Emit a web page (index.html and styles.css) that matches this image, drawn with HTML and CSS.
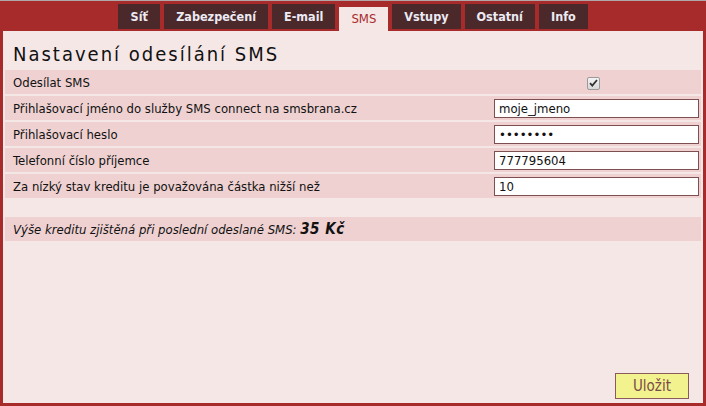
FILE: index.html
```html
<!DOCTYPE html>
<html lang="cs">
<head>
    <meta charset="UTF-8">
    <title>Nastavení SMS</title>
    <link rel="stylesheet" href="styles.css">
</head>
<body>

<div class="top">
    <ul class="tabs">
        <li>Síť</li>
        <li>Zabezpečení</li>
        <li>E-mail</li>
        <li class="active">SMS</li>
        <li>Vstupy</li>
        <li>Ostatní</li>
        <li>Info</li>
    </ul>
</div>

<div class="panel">
    <h1>Nastavení odesílání SMS</h1>

    <table class="form">
        <tr>
            <td class="label">Odesílat SMS</td>
            <td class="field center">
                <span class="check">
                    <svg width="9" height="8" viewBox="0 0 9 8"><path d="M1 4.2 L3.3 6.6 L8 1" fill="none" stroke="#333" stroke-width="1.8"/></svg>
                </span>
            </td>
        </tr>
        <tr>
            <td class="label">Přihlašovací jméno do služby SMS connect na smsbrana.cz</td>
            <td class="field"><input type="text" value="moje_jmeno"></td>
        </tr>
        <tr>
            <td class="label">Přihlašovací heslo</td>
            <td class="field"><input type="password" value="heslo123"></td>
        </tr>
        <tr>
            <td class="label">Telefonní číslo příjemce</td>
            <td class="field"><input type="text" value="777795604"></td>
        </tr>
        <tr>
            <td class="label">Za nízký stav kreditu je považována částka nižší než</td>
            <td class="field"><input type="text" value="10"></td>
        </tr>
    </table>

    <div class="credit">Výše kreditu zjištěná při poslední odeslané SMS: <b>35 Kč</b></div>

    <button class="save">Uložit</button>
</div>

</body>
</html>
```

FILE: styles.css
```css
body {
    margin: 0;
    padding: 0;
    font-family: "DejaVu Sans Condensed", "DejaVu Sans", sans-serif;
    font-size: 13px;
    color: #111;
    background-color: #f6e7e7;
}
.top {
    border-top: 1px solid #b0a8a8;
    background-color: #a82b2b;
    height: 30px;
}
.tabs {
    list-style-type: none;
    margin: 0;
    padding: 0;
    height: 30px;
    display: flex;
    justify-content: center;
    align-items: flex-end;
    gap: 4px;
}
.tabs li {
    height: 25px;
    line-height: 25px;
    margin-bottom: 2px;
    padding: 0 12px;
    min-width: 42px;
    box-sizing: border-box;
    text-align: center;
    background-color: #4b292b;
    color: #ecebf4;
    font-size: 12.5px;
    font-weight: bold;
    cursor: pointer;
}
.tabs li.active {
    height: 24px;
    line-height: 24px;
    margin-bottom: 0;
    background-color: #f6e7e7;
    color: #a82b2b;
    font-size: 13px;
    font-weight: normal;
}
.panel {
    height: 372px;
    border: 3px solid #a82b2b;
    border-top: none;
    padding: 0 2px;
    display: flex;
    flex-direction: column;
}
h1 {
    font-size: 20px;
    font-weight: normal;
    letter-spacing: 2px;
    line-height: 24px;
    margin: 11px 0 2px 8px;
}
.form {
    width: 100%;
    border-collapse: separate;
    border-spacing: 0 2px;
}
.form td {
    height: 24px;
    padding: 0;
    background-color: #efd1d1;
}
.form td.label {
    padding-left: 8px;
}
.form td.field {
    width: 205px;
    padding-right: 2px;
}
.form td.center {
    text-align: center;
}
.form input {
    display: block;
    width: 205px;
    height: 19px;
    box-sizing: border-box;
    margin: 0;
    padding: 0 0 0 4px;
    border: 1px solid #7e4f51;
    background-color: #fff;
    font-family: "DejaVu Sans Condensed", "DejaVu Sans", sans-serif;
    font-size: 13px;
    color: #111;
}
.check {
    display: inline-flex;
    align-items: center;
    justify-content: center;
    width: 11px;
    height: 11px;
    margin-right: 6px;
    border: 1px solid #9a9a9a;
    border-radius: 2px;
    background: linear-gradient(#f4f4f4, #d8d8d8);
    vertical-align: middle;
}
.credit {
    margin-top: 17px;
    height: 24px;
    line-height: 24px;
    padding-left: 8px;
    background-color: #efd1d1;
    font-style: italic;
}
.credit b {
    font-size: 15px;
    letter-spacing: 0.5px;
}
.save {
    margin: auto 12px 4px auto;
    width: 74px;
    height: 26px;
    border: 1px solid #8b5b5b;
    background-color: #f2f28e;
    color: #7b4b4b;
    font-family: "DejaVu Sans Condensed", "DejaVu Sans", sans-serif;
    font-size: 15px;
    cursor: pointer;
}
```
